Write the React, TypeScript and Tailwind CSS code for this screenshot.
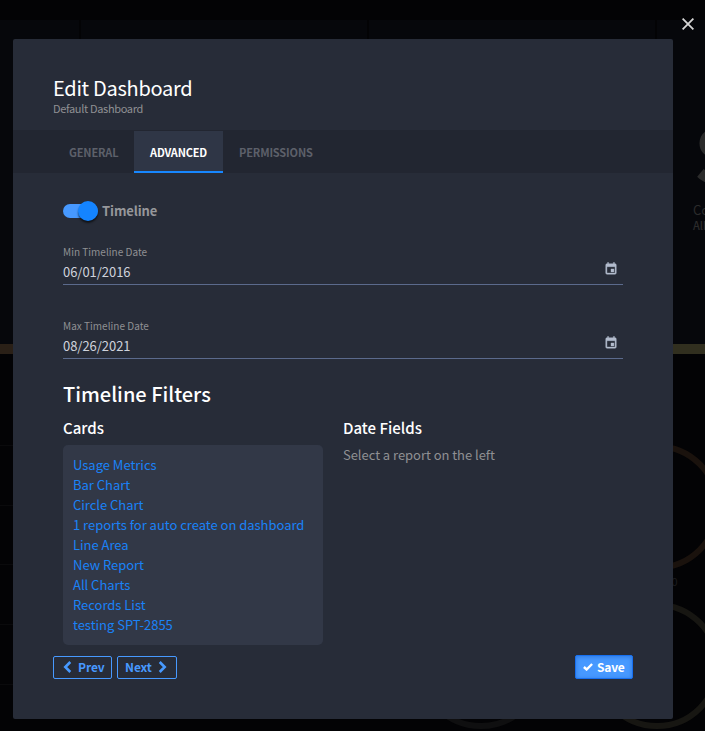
import type { ReactNode } from "react";

const cards = [
  "Usage Metrics",
  "Bar Chart",
  "Circle Chart",
  "1 reports for auto create on dashboard",
  "Line Area",
  "New Report",
  "All Charts",
  "Records List",
  "testing SPT-2855",
];

function Backdrop() {
  return (
    <svg className="absolute inset-0" width="705" height="731" viewBox="0 0 705 731">
      <rect width="705" height="731" fill="#030305" />
      <g fill="#06070b">
        <rect x="0" y="20" width="79" height="324" />
        <rect x="81" y="20" width="286" height="324" />
        <rect x="369" y="20" width="286" height="324" />
        <rect x="657" y="20" width="48" height="324" />
      </g>
      <rect x="0" y="344" width="13" height="10" fill="#2a2017" />
      <rect x="673" y="344" width="32" height="10" fill="#312f1f" />
      <g stroke="#0a0a0c" strokeWidth="1">
        <path d="M0 445.5H13M0 505.5H13M0 564.5H13M0 624.5H13M0 684.5H13" />
      </g>
      <g fill="none" strokeWidth="6">
        <circle cx="657" cy="507" r="60.5" stroke="#1a120d" />
        <circle cx="657" cy="665.5" r="60.5" stroke="#171612" />
        <circle cx="481" cy="665.5" r="60.5" stroke="#0f0f10" />
      </g>
      <text x="694" y="184" fontSize="76" fontWeight="700" fill="#2b2b2b">S</text>
      <text x="693" y="215" fontSize="13" fill="#2b2b2b">Co</text>
      <text x="693" y="230" fontSize="11" fontWeight="500" fill="#2b2b2b">All</text>
      <text x="671.5" y="586" fontSize="11" fill="#1c1c1e">0</text>
    </svg>
  );
}

function DateField({ label, value }: { label: string; value: string }) {
  return (
    <div className="h-[40px] border-b border-[#5b6a8c]">
      <div className="h-[15px] text-[10px] leading-[14px] tracking-[0.02px] text-[#8f9093]">{label}</div>
      <div className="flex h-[23px] items-center justify-between">
        <span className="text-[13px] leading-[23px] tracking-[-0.04px] text-[#cfd3dc]">{value}</span>
        <svg className="relative -top-[3px] mr-[5px]" width="14" height="14" viewBox="0 0 24 24" fill="#b3bccd" stroke="#b3bccd" strokeWidth=".7">
          <path d="M17 12h-5v5h5v-5zM16 1v2H8V1H6v2H5c-1.110 0-1.990.9-1.990 2L3 19c0 1.100.89 2 2 2h14c1.100 0 2-.9 2-2V5c0-1.100-.9-2-2-2h-1V1h-2zm3 18H5V8h14v11z" />
        </svg>
      </div>
    </div>
  );
}

function Tab({ children, active }: { children: ReactNode; active?: boolean }) {
  return (
    <div
      className={
        active
          ? "h-[42px] w-[89px] border-b-2 border-[#1787ff] bg-[#2f3646] text-center text-[11px] leading-[42px] font-bold tracking-[-0.2px] text-white"
          : "h-[42px] min-w-[81px] pl-4 text-[11px] leading-[42px] font-bold tracking-[-0.15px] text-[#5d606a]"
      }
    >
      {children}
    </div>
  );
}

export default function App() {
  return (
    <div className="relative h-[731px] w-[705px] overflow-hidden bg-black font-['Noto_Sans_CJK_SC','Noto_Sans',sans-serif]">
      <Backdrop />
      <svg className="absolute top-[18px] left-[682px]" width="12" height="12" viewBox="0 0 12 12" stroke="#d6d6d6" strokeWidth="1.8">
        <path d="M.6.6L11.4 11.4M11.4.6L.6 11.4" />
      </svg>
      <main className="relative mt-[39px] ml-[13px] flex h-[680px] w-[660px] flex-col rounded-[2px] bg-[#272c38]">
        <header className="h-[91px] px-10 pt-[35px]">
          <h1 className="h-[28px] text-[20px] leading-[28px] tracking-[-0.28px] text-white">Edit Dashboard</h1>
          <p className="text-[11px] leading-[13px] tracking-[-0.33px] text-[#8f9093]">Default Dashboard</p>
        </header>
        <nav className="flex h-[43px] bg-[#222631] pt-px pl-10">
          <Tab>GENERAL</Tab>
          <Tab active>ADVANCED</Tab>
          <Tab>PERMISSIONS</Tab>
        </nav>
        <section className="px-[50px]">
          <div className="mt-[26px] flex h-[24px] items-center">
            <span className="flex h-[14px] w-[35px] items-center justify-end rounded-full bg-[#4799ff]">
              <span className="h-5 w-5 rounded-full bg-[#1484ff] shadow-[0_2px_2px_rgba(0,0,0,0.6)]" />
            </span>
            <span className="ml-1 text-[13px] leading-[20px] font-bold tracking-[-0.1px] text-[#96979b]">Timeline</span>
          </div>
          <div className="mt-[22px]">
            <DateField label="Min Timeline Date" value="06/01/2016" />
          </div>
          <div className="mt-[34px]">
            <DateField label="Max Timeline Date" value="08/26/2021" />
          </div>
          <h2 className="mt-[20px] h-[30px] text-[20px] leading-[30px] font-medium text-white">Timeline Filters</h2>
          <div className="mt-[9px] flex gap-5">
            <div className="w-[260px]">
              <h3 className="h-[20px] text-[15px] leading-[20px] font-medium text-white">Cards</h3>
              <ul className="mt-[7px] h-[200px] rounded-[5px] bg-[#323847] p-[10px]">
                {cards.map((card) => (
                  <li key={card} className="h-5 text-[13px] leading-[20px] tracking-[-0.02px] whitespace-nowrap text-[#1a82f7]">
                    {card}
                  </li>
                ))}
              </ul>
            </div>
            <div>
              <h3 className="h-[20px] text-[15px] leading-[20px] font-medium text-white">Date Fields</h3>
              <p className="mt-[7px] text-[13px] leading-[20px] tracking-[-0.04px] text-[#8f9093]">Select a report on the left</p>
            </div>
          </div>
        </section>
        <footer className="mt-[10px] flex h-[24px] px-10 text-[12px] leading-[20px] font-bold">
          <button className="mt-px flex h-[23px] w-[59px] items-center rounded-[2px] border border-[#4799ff] pb-[2px] pl-[9px] tracking-[-0.1px] text-[#4799ff]">
            <svg className="mt-px mr-[6px]" width="9" height="12" viewBox="0 0 9 12" fill="none" stroke="currentColor" strokeWidth="2.6">
              <path d="M7.3 1L2.3 6l5 5" />
            </svg>
            Prev
          </button>
          <button className="mt-px ml-[5px] flex h-[23px] w-[60px] items-center rounded-[2px] border border-[#4799ff] pb-[2px] pl-[7px] tracking-[-0.1px] text-[#4799ff]">
            Next
            <svg className="mt-px ml-[6px]" width="9" height="12" viewBox="0 0 9 12" fill="none" stroke="currentColor" strokeWidth="2.6">
              <path d="M1.7 1l5 5-5 5" />
            </svg>
          </button>
          <button className="ml-auto flex h-[24px] w-[58px] items-center rounded-[2px] border border-[#1770f0] bg-[#4799ff] pb-px pl-[7px] tracking-[-0.2px] text-white shadow-[inset_0_1px_4px_rgba(0,60,160,0.35)]">
            <svg className="mt-px mr-[4px]" width="10" height="8" viewBox="0 0 10 8" fill="none" stroke="currentColor" strokeWidth="2.4">
              <path d="M.9 4L3.6 6.500 9.1 1" />
            </svg>
            Save
          </button>
        </footer>
      </main>
    </div>
  );
}
